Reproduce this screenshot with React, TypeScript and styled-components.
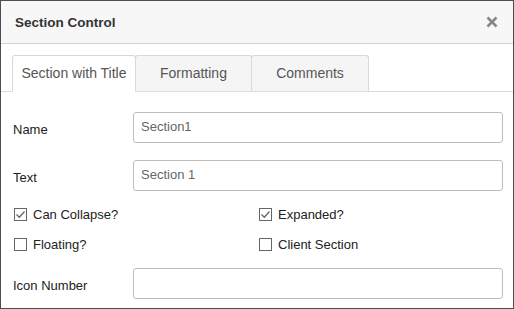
import React from "react";
import styled, { createGlobalStyle } from "styled-components";

const Global = createGlobalStyle`
  html, body { margin: 0; padding: 0; background: #fff; }
  body { font-family: "Liberation Sans", Arial, sans-serif; }
  * { box-sizing: border-box; }
`;

const Dialog = styled.div`
  width: 514px;
  height: 309px;
  border: 1px solid #4d4d4d;
  background: #fff;
  display: flex;
  flex-direction: column;
`;

const Header = styled.div`
  height: 43px;
  flex: none;
  background: #f7f7f7;
  border-bottom: 1px solid #d2d2d2;
  display: flex;
  align-items: center;
  justify-content: space-between;
  padding: 0 15px 0 14px;
`;

const Title = styled.div`
  font-size: 13.5px;
  font-weight: bold;
  color: #333;
`;

const CloseButton = styled.button`
  border: 0;
  background: none;
  padding: 0;
  width: 12px;
  height: 12px;
  display: flex;
  cursor: pointer;
`;

const TabBar = styled.div`
  margin-top: 11px;
  padding: 0 11px;
  display: flex;
  border-bottom: 1px solid #dcdcdc;
`;

const Tab = styled.div<{ $active?: boolean; $w: number; $first?: boolean }>`
  width: ${(p) => p.$w}px;
  height: 37px;
  margin-bottom: -1px;
  margin-left: ${(p) => (p.$first ? 0 : -1)}px;
  display: flex;
  align-items: center;
  justify-content: center;
  font-size: 14px;
  color: #555;
  border: 1px solid #d8d8d8;
  border-bottom: ${(p) => (p.$active ? "1px solid #fff" : "1px solid #dcdcdc")};
  border-radius: 3px 3px 0 0;
  background: ${(p) => (p.$active ? "#fff" : "#f5f5f5")};
  position: relative;
  z-index: ${(p) => (p.$active ? 1 : 0)};
  padding-bottom: 1px;
`;

const Form = styled.div`
  padding: 20px 10px 0 12px;
  display: flex;
  flex-direction: column;
`;

const FieldRow = styled.div<{ $mt?: number }>`
  display: grid;
  grid-template-columns: 120px 1fr;
  align-items: center;
  margin-top: ${(p) => p.$mt ?? 0}px;
`;

const Label = styled.label`
  font-size: 13px;
  color: #222;
  padding-top: 4px;
`;

const Input = styled.input`
  height: 31px;
  width: 100%;
  border: 1px solid #bdbdbd;
  border-radius: 3px;
  padding: 0 7px 2px;
  font-family: "Liberation Sans", Arial, sans-serif;
  font-size: 13px;
  color: #666;
  outline: none;
`;

const CheckGrid = styled.div`
  display: grid;
  grid-template-columns: 245px 1fr;
  grid-auto-rows: 20px;
  row-gap: 10px;
  margin-top: 13px;
  padding-left: 1px;
`;

const CheckItem = styled.label`
  display: flex;
  align-items: center;
  gap: 6px;
  font-size: 13px;
  color: #222;
`;

const Box = styled.span`
  width: 13px;
  height: 13px;
  border: 1px solid #666;
  background: #fff;
  display: flex;
  align-items: center;
  justify-content: center;
  flex: none;
  margin-top: 1px;
`;

const Check = ({ checked, label }: { checked?: boolean; label: string }) => (
  <CheckItem>
    <Box>
      {checked && (
        <svg width="11" height="11" viewBox="0 0 11 11">
          <path d="M1.5 5.5 L4.3 8.3 L9.5 2.5" fill="none" stroke="#666" strokeWidth="1.3" />
        </svg>
      )}
    </Box>
    {label}
  </CheckItem>
);

export default function App() {
  return (
    <>
      <Global />
      <Dialog>
        <Header>
          <Title>Section Control</Title>
          <CloseButton aria-label="Close">
            <svg width="12" height="12" viewBox="0 0 12 12">
              <path d="M1.5 1.5 L10.5 10.5 M10.5 1.5 L1.5 10.5" stroke="#888" strokeWidth="2.6" />
            </svg>
          </CloseButton>
        </Header>
        <TabBar>
          <Tab $active $first $w={124}>Section with Title</Tab>
          <Tab $w={117}>Formatting</Tab>
          <Tab $w={118}>Comments</Tab>
        </TabBar>
        <Form>
          <FieldRow>
            <Label>Name</Label>
            <Input defaultValue="Section1" />
          </FieldRow>
          <FieldRow $mt={17}>
            <Label>Text</Label>
            <Input defaultValue="Section 1" />
          </FieldRow>
          <CheckGrid>
            <Check checked label="Can Collapse?" />
            <Check checked label="Expanded?" />
            <Check label="Floating?" />
            <Check label="Client Section" />
          </CheckGrid>
          <FieldRow $mt={14}>
            <Label>Icon Number</Label>
            <Input defaultValue="" />
          </FieldRow>
        </Form>
      </Dialog>
    </>
  );
}
